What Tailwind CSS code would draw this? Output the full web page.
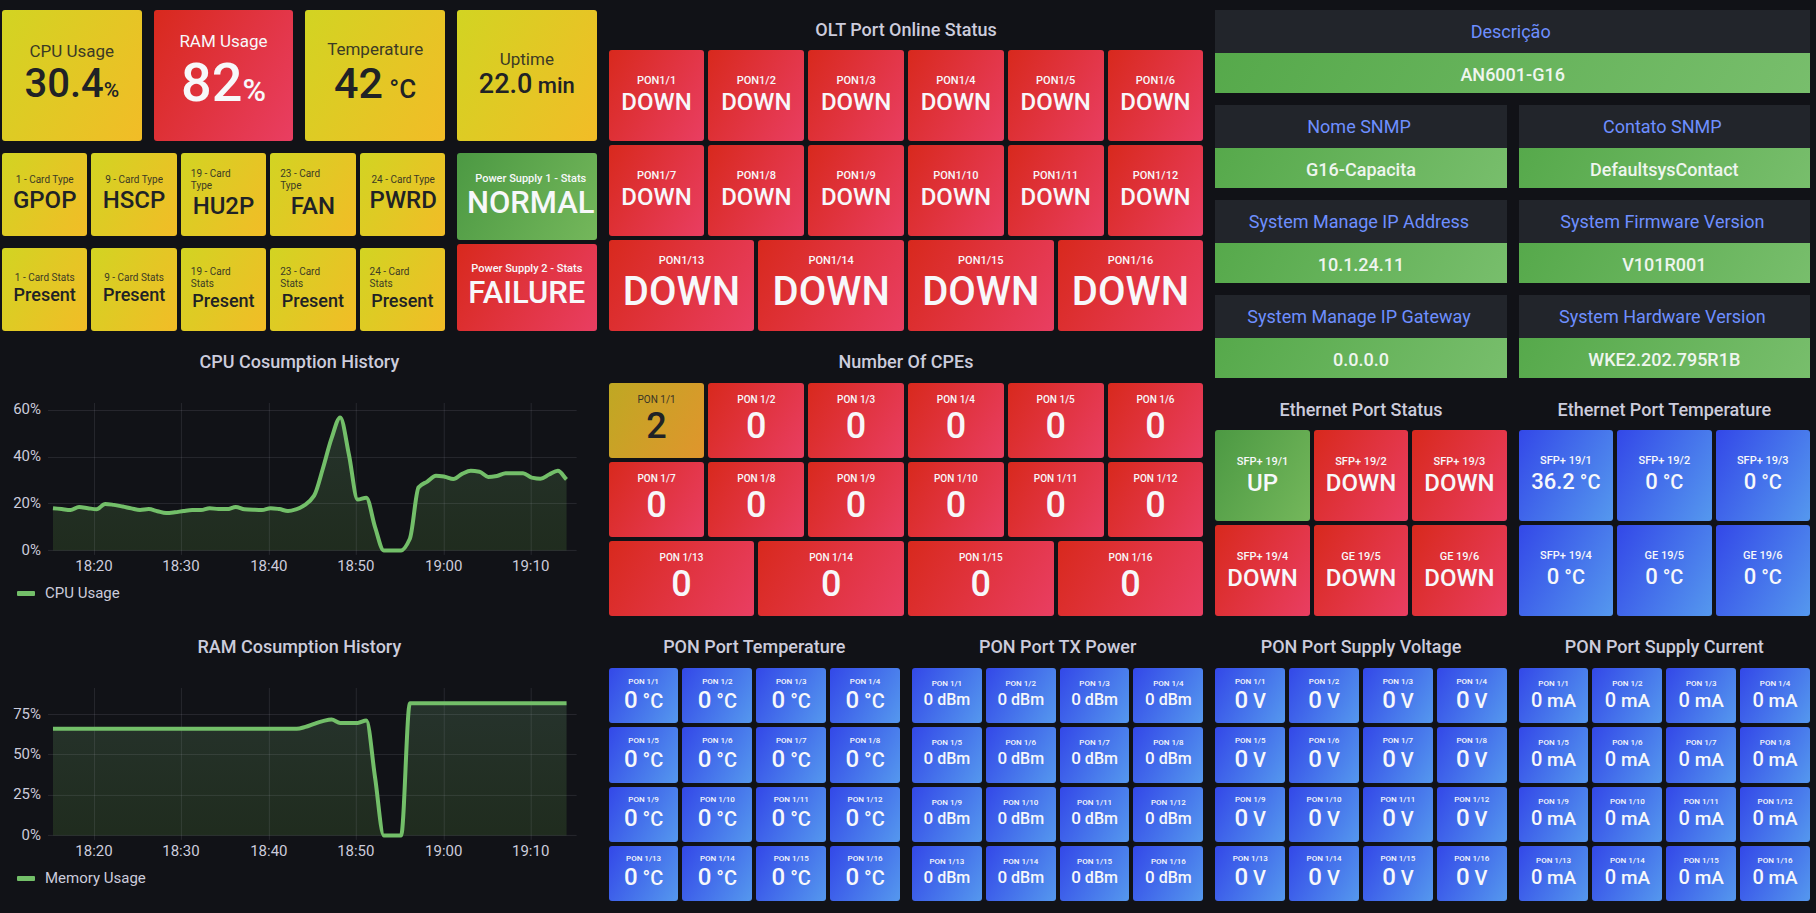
<!DOCTYPE html>
<html lang="en">
<head>
<meta charset="utf-8">
<meta name="viewport" content="width=device-width, initial-scale=1">
<title>OLT Dashboard</title>
<script src="https://cdn.jsdelivr.net/npm/@tailwindcss/browser@4"></script>
</head>
<body class="min-h-screen bg-[#111217] font-['Roboto',sans-serif] text-[#ccccdc]">
<main class="grid grid-cols-3 items-start gap-3 pt-2.5 pr-1.5 pb-3 pl-0.5">

  <div class="flex min-w-0 flex-col gap-3">
    <section id="gauges" class="grid h-[131px] grid-cols-4 gap-3" aria-label="System gauges"></section>
    <div class="grid grid-cols-4 gap-3">
      <div class="col-span-3 flex flex-col gap-3">
        <section id="card-types" class="grid h-[83px] grid-cols-5 gap-1" aria-label="Card types"></section>
        <section id="card-stats" class="grid h-[83px] grid-cols-5 gap-1" aria-label="Card stats"></section>
      </div>
      <section id="power" class="grid grid-rows-2 gap-1" aria-label="Power supplies"></section>
    </div>
    <section>
      <h2 class="flex h-10 items-center justify-center pb-0.5 text-lg font-medium">CPU Cosumption History</h2>
      <svg id="cpu-chart" class="block h-auto w-full" viewBox="0 0 595 196" role="img" aria-label="CPU usage over time"></svg>
      <div class="flex h-[37px] items-start gap-2.5 pt-[3px] pl-[15px] text-[15px] leading-[22px]"><span class="mt-[9px] h-[5px] w-[18px] rounded-[1px] bg-[#73bf69]"></span>CPU Usage</div>
    </section>
    <section>
      <h2 class="flex h-10 items-center justify-center pb-0.5 text-lg font-medium">RAM Cosumption History</h2>
      <svg id="ram-chart" class="block h-auto w-full" viewBox="0 0 595 196" role="img" aria-label="Memory usage over time"></svg>
      <div class="flex h-[37px] items-start gap-2.5 pt-[3px] pl-[15px] text-[15px] leading-[22px]"><span class="mt-[9px] h-[5px] w-[18px] rounded-[1px] bg-[#73bf69]"></span>Memory Usage</div>
    </section>
  </div>

  <div class="flex min-w-0 flex-col gap-3">
    <section>
      <h2 class="flex h-10 items-center justify-center text-lg font-medium">OLT Port Online Status</h2>
      <div id="olt-status" class="grid h-[281px] grid-cols-12 grid-rows-3 gap-1"></div>
    </section>
    <section>
      <h2 class="flex h-10 items-center justify-center pb-0.5 text-lg font-medium">Number Of CPEs</h2>
      <div id="cpes" class="grid h-[233px] grid-cols-12 grid-rows-3 gap-1"></div>
    </section>
    <div class="grid grid-cols-2 gap-3">
      <section>
        <h2 class="flex h-10 items-center justify-center pb-0.5 text-lg font-medium">PON Port Temperature</h2>
        <div id="pon-temp" class="grid h-[233px] grid-cols-4 grid-rows-4 gap-1"></div>
      </section>
      <section>
        <h2 class="flex h-10 items-center justify-center pb-0.5 text-lg font-medium">PON Port TX Power</h2>
        <div id="pon-tx" class="grid h-[233px] grid-cols-4 grid-rows-4 gap-1"></div>
      </section>
    </div>
  </div>

  <div class="flex min-w-0 flex-col gap-3">
    <div id="info" class="grid grid-cols-2 gap-3"></div>
    <div class="grid grid-cols-2 gap-3">
      <section>
        <h2 class="flex h-10 items-center justify-center text-lg font-medium">Ethernet Port Status</h2>
        <div id="eth-status" class="grid h-[186px] grid-cols-3 grid-rows-2 gap-1"></div>
      </section>
      <section>
        <h2 class="flex h-10 items-center justify-center text-lg font-medium">Ethernet Port Temperature</h2>
        <div id="eth-temp" class="grid h-[186px] grid-cols-3 grid-rows-2 gap-1"></div>
      </section>
    </div>
    <div class="grid grid-cols-2 gap-3">
      <section>
        <h2 class="flex h-10 items-center justify-center pb-0.5 text-lg font-medium">PON Port Supply Voltage</h2>
        <div id="pon-volt" class="grid h-[233px] grid-cols-4 grid-rows-4 gap-1"></div>
      </section>
      <section>
        <h2 class="flex h-10 items-center justify-center pb-0.5 text-lg font-medium">PON Port Supply Current</h2>
        <div id="pon-curr" class="grid h-[233px] grid-cols-4 grid-rows-4 gap-1"></div>
      </section>
    </div>
  </div>
</main>

<script>
const tone = {
  yellow: 'bg-[linear-gradient(120deg,#d2d422,#f2bc27)] text-[#202226]',
  amber: 'bg-[linear-gradient(120deg,#bfa823,#e0952d)] text-[#202226]',
  red: 'bg-[linear-gradient(120deg,#d8291d,#e93e62)] text-[#f7f8fa]',
  green: 'bg-[linear-gradient(120deg,#4c9943,#74b75b)] text-[#f7f8fa]',
  blue: 'bg-[linear-gradient(120deg,#3348e8,#5598ee)] text-[#f7f8fa]',
};
// One coloured stat tile: label above, value (and unit) below.
function tile({ t, label, value, unit = '', l, v, u = '', span = '', pad = 'pb-0.5' }) {
  const dark = t === 'yellow' || t === 'amber';
  const wrapped = label.includes('<br>');
  return `<div class="flex min-w-0 flex-col justify-center rounded-[3px] px-2.5 ${pad} ${span} ${tone[t]}">
    <div class="w-full min-w-max text-center whitespace-nowrap">
      <div class="${l} ${dark ? 'font-normal opacity-85' : ''} ${wrapped ? 'text-left' : ''}">${label}</div>
      <div class="${v} font-medium">${value}${unit ? `<span class="${u}">${unit}</span>` : ''}</div>
    </div></div>`;
}
const put = (id, tiles) => { document.getElementById(id).innerHTML = tiles.map(tile).join(''); };

put('gauges', [
  { t: 'yellow', label: 'CPU Usage', value: '30.4', unit: '%', l: 'text-[17px] leading-5', v: 'text-[40px] leading-[46px]', u: 'text-[21px]', pad: 'pt-0.5' },
  { t: 'red', label: 'RAM Usage', value: '82', unit: '%', l: 'text-[17px] leading-5', v: 'text-[54px] leading-[63px]', u: 'text-[32px]', pad: 'pt-0.5' },
  { t: 'yellow', label: 'Temperature', value: '42', unit: ' °C', l: 'text-[17px] leading-5', v: 'text-[43px] leading-[49px]', u: 'text-[26px]', pad: 'pt-0.5' },
  { t: 'yellow', label: 'Uptime', value: '22.0', unit: ' min', l: 'text-[17px] leading-5', v: 'text-[27px] leading-[31px]', u: 'text-[22px]', pad: 'pb-0.5' },
]);
put('card-types', [['1 - Card Type', 'GPOP'], ['9 - Card Type', 'HSCP'], ['19 - Card<br>Type', 'HU2P'], ['23 - Card<br>Type', 'FAN'], ['24 - Card Type', 'PWRD']]
  .map(([label, value]) => ({ t: 'yellow', label, value, l: 'text-[10px] leading-3', v: 'text-2xl leading-7' })));
put('card-stats', ['1 - Card Stats', '9 - Card Stats', '19 - Card<br>Stats', '23 - Card<br>Stats', '24 - Card<br>Stats']
  .map(label => ({ t: 'yellow', label, value: 'Present', l: 'text-[10px] leading-3', v: 'text-lg leading-[22px]' })));
put('power', [
  { t: 'green', label: 'Power Supply 1 - Stats', value: 'NORMAL', l: 'text-[11px] leading-[14px] font-medium', v: 'text-[31px] leading-[34px]' },
  { t: 'red', label: 'Power Supply 2 - Stats', value: 'FAILURE', l: 'text-[11px] leading-[14px] font-medium', v: 'text-[31px] leading-[34px]', pad: 'pb-1' },
]);

const ports = Array.from({ length: 16 }, (_, i) => i + 1);
put('olt-status', ports.map(n => ({ t: 'red', label: `PON1/${n}`, value: 'DOWN', span: n > 12 ? 'col-span-3' : 'col-span-2',
  l: 'text-[11px] leading-[14px] font-medium', v: n > 12 ? 'text-[40px] leading-[48px]' : 'text-2xl leading-7' })));
put('cpes', ports.map(n => ({ t: n === 1 ? 'amber' : 'red', label: `PON 1/${n}`, value: n === 1 ? '2' : '0', span: n > 12 ? 'col-span-3' : 'col-span-2',
  l: 'text-[10px] leading-3 font-medium', v: 'text-4xl leading-[41px]', pad: 'pb-0' })));

const pon = (value, unit, v, u) => ports.map(n => ({ t: 'blue', label: `PON 1/${n}`, value, unit, l: 'text-[8px] leading-[9px] font-medium', v, u, pad: 'pb-0' }));
put('pon-temp', pon('0', ' °C', 'text-2xl leading-7', 'text-xl'));
put('pon-tx', pon('0', ' dBm', 'text-[17px] leading-5', 'text-base'));
put('pon-volt', pon('0', ' V', 'text-2xl leading-7', 'text-xl'));
put('pon-curr', pon('0', ' mA', 'text-xl leading-[25px]', 'text-[19px]'));

const eth = ['SFP+ 19/1', 'SFP+ 19/2', 'SFP+ 19/3', 'SFP+ 19/4', 'GE 19/5', 'GE 19/6'];
put('eth-status', eth.map((label, i) => ({ t: i ? 'red' : 'green', label, value: i ? 'DOWN' : 'UP', l: 'text-[11px] leading-[14px] font-medium', v: 'text-2xl leading-7', pad: 'pb-0' })));
put('eth-temp', eth.map((label, i) => ({ t: 'blue', label, value: i ? '0' : '36.2', unit: ' °C', l: 'text-[11px] leading-[14px] font-medium', v: 'text-[22px] leading-[26px]', u: 'text-xl', pad: 'pb-0.5' })));

document.getElementById('info').innerHTML = [
  ['Descrição', 'AN6001-G16', 'col-span-2'],
  ['Nome SNMP', 'G16-Capacita'], ['Contato SNMP', 'DefaultsysContact'],
  ['System Manage IP Address', '10.1.24.11'], ['System Firmware Version', 'V101R001'],
  ['System Manage IP Gateway', '0.0.0.0'], ['System Hardware Version', 'WKE2.202.795R1B'],
].map(([head, value, span = '']) => `<table class="w-full border-collapse text-lg ${span}">
  <thead><tr><th scope="col" class="h-[43px] bg-[#22252b] p-0 pr-1 text-center font-normal text-[#6e8fff]">${head}</th></tr></thead>
  <tbody><tr><td class="h-10 bg-[linear-gradient(120deg,#56a94b,#78be6c)] p-0 pt-[3px] text-center leading-6 font-medium text-[#eef5ee]">${value}</td></tr></tbody></table>`).join('');

// Monotone cubic path through the points, so flat stretches stay flat.
function smooth(p) {
  const n = p.length, s = [], m = [];
  for (let i = 0; i < n - 1; i++) s.push((p[i + 1][1] - p[i][1]) / (p[i + 1][0] - p[i][0]));
  m[0] = s[0]; m[n - 1] = s[n - 2];
  for (let i = 1; i < n - 1; i++) m[i] = s[i - 1] * s[i] <= 0 ? 0 : 2 * s[i - 1] * s[i] / (s[i - 1] + s[i]);
  let d = `M${p[0][0]},${p[0][1]}`;
  for (let i = 0; i < n - 1; i++) {
    const h = (p[i + 1][0] - p[i][0]) / 3;
    d += `C${p[i][0] + h},${p[i][1] + m[i] * h} ${p[i + 1][0] - h},${p[i + 1][1] - m[i + 1] * h} ${p[i + 1][0]},${p[i + 1][1]}`;
  }
  return d;
}
function chart(id, values, ticks, perPercent) {
  const base = 167.5, x0 = 51, step = 8.71;
  const y = v => base - v * perPercent;
  const line = smooth(values.map((v, i) => [x0 + i * step, y(v)]));
  const xt = ['18:20', '18:30', '18:40', '18:50', '19:00', '19:10'];
  document.getElementById(id).innerHTML = `
    <defs><linearGradient id="${id}-fill" x1="0" x2="0" y1="0" y2="1">
      <stop offset="0" stop-color="#7fbf88" stop-opacity=".19"/><stop offset="1" stop-color="#73bf49" stop-opacity=".15"/></linearGradient></defs>
    <path d="${line}L${x0 + 59 * step},${base}L${x0},${base}Z" fill="url(#${id}-fill)"/>
    <g stroke="#ccccdc" stroke-opacity=".12">
      ${ticks.map(t => `<path d="M46 ${Math.round(y(t) - 0.5) + 0.5}H575"/>`).join('')}
      ${xt.map((_, i) => `<path d="M${Math.round(92 + i * 87.45) + 0.5} 20V172"/>`).join('')}
    </g>
    <path d="${line}" fill="none" stroke="#73bf69" stroke-width="4"/>
    <g fill="#ccccdc" font-size="15">
      ${ticks.map(t => `<text x="39" y="${Math.round(y(t) + 4)}" text-anchor="end">${t}%</text>`).join('')}
      ${xt.map((t, i) => `<text x="${Math.round(92 + i * 87.45)}" y="188" text-anchor="middle">${t}</text>`).join('')}
    </g>`;
}
chart('cpu-chart', [18.1, 17.7, 17.3, 18.6, 18.1, 17.6, 19.9, 19.5, 18.8, 18, 17.3, 17.7, 16.8, 16, 16.3, 16.9, 17.3, 17.3, 18.1, 17.7,
  17.7, 18.6, 17.6, 17.4, 17.3, 18.1, 17.7, 16.9, 17.7, 19.6, 23.5, 35, 48, 57, 41, 21.8, 22.6, 10, 0, 0,
  0, 5, 27, 29.5, 32, 31.6, 30.6, 32.8, 34.1, 33.7, 31.5, 31.9, 33.1, 33.1, 33.1, 31.2, 30.7, 32.5, 34.1, 30.4], [0, 20, 40, 60], 2.335);
chart('ram-chart', [...Array(29).fill(66.1), 67.3, 69.2, 70.9, 71.9, 69.8, 69.8, 69.8, 71.3, 36, 0, 0, 0, ...Array(19).fill(82)], [0, 25, 50, 75], 1.613);
</script>
</body>
</html>
